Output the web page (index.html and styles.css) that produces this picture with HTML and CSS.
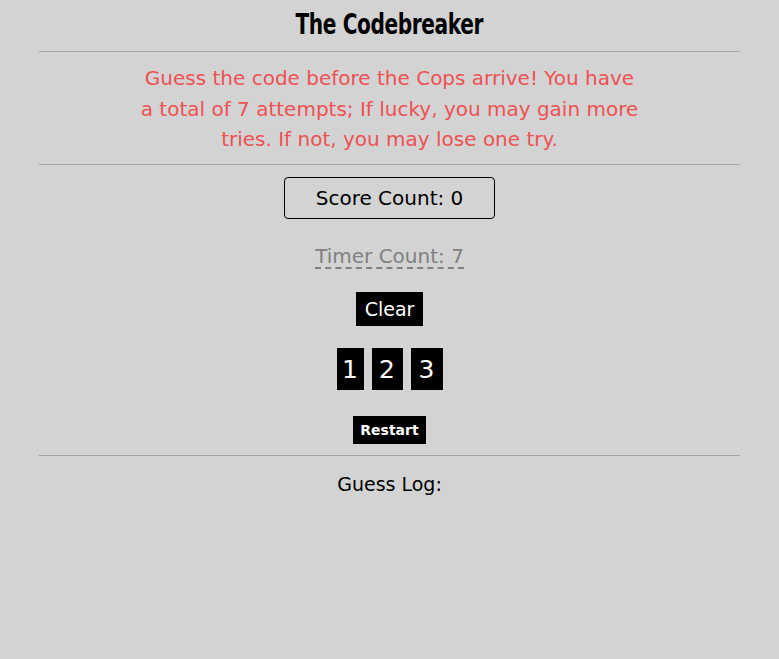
FILE: index.html
```html
<!DOCTYPE html>
<html>
<head>
<meta charset="utf-8">
<link rel="stylesheet" href="styles.css">
</head>
<body>
<main class="page">
  <h1 class="title"><span class="title-text">The Codebreaker</span></h1>
  <hr class="rule">
  <p class="intro">Guess the code before the Cops arrive! You have<br>a total of 7 attempts; If lucky, you may gain more<br>tries. If not, you may lose one try.</p>
  <hr class="rule">
  <div class="score">Score Count: 0</div>
  <div class="timer"><span class="timer-text">Timer Count: 7</span></div>
  <button class="btn clear">Clear</button>
  <div class="digits">
    <button class="btn digit d1">1</button>
    <button class="btn digit d2">2</button>
    <button class="btn digit d3">3</button>
  </div>
  <button class="btn restart">Restart</button>
  <hr class="rule">
  <div class="log">Guess Log:</div>
</main>
</body>
</html>
```
FILE: styles.css
```css
html, body {
  margin: 0;
  padding: 0;
  background: #d3d3d3;
}
body {
  font-family: "Comic Sans MS", "DejaVu Sans", sans-serif;
  color: #000;
}
.page {
  display: flex;
  flex-direction: column;
  align-items: center;
  padding-top: 8px;
}
.title {
  margin: 0;
  height: 34px;
  line-height: 34px;
  font-family: "DejaVu Sans", sans-serif;
  font-stretch: condensed;
  font-weight: 900;
  font-size: 28px;
}
.title-text {
  display: inline-block;
  transform: scaleX(0.8);
  letter-spacing: -0.5px;
}
.rule {
  width: 90%;
  margin: 0;
  border: 0;
  border-top: 1px solid #a3a3a3;
  height: 0;
}
.title + .rule { margin-top: 9px; }
.intro {
  margin: 11px 0 0;
  text-align: center;
  color: #ee5151;
  font-size: 20px;
  line-height: 30.5px;
  height: 92px;
}
.intro + .rule { margin-top: 9px; }
.score {
  margin-top: 12px;
  width: 209px;
  height: 40px;
  border: 1px solid #000;
  border-radius: 4px;
  display: flex;
  align-items: center;
  justify-content: center;
  font-size: 20px;
}
.timer {
  margin-top: 25px;
  font-size: 20px;
  color: #808080;
  height: 25px;
}
.timer-text {
  display: inline-block;
  border-bottom: 2px dashed #808080;
  line-height: 22px;
}
.btn {
  background: #000;
  color: #fff;
  border: 0;
  padding: 0;
  font-family: "Comic Sans MS", "DejaVu Sans", sans-serif;
  cursor: pointer;
}
.clear {
  margin-top: 23px;
  width: 67px;
  height: 34px;
  font-size: 19px;
}
.digits {
  margin-top: 22px;
  display: flex;
  gap: 8px;
}
.digit {
  height: 42px;
  font-size: 25px;
}
.d1 { width: 27px; }
.d2 { width: 31px; }
.d3 { width: 32px; }
.restart {
  margin-top: 26px;
  width: 73px;
  height: 28px;
  font-size: 14px;
  font-weight: 700;
}
.restart + .rule { margin-top: 11px; }
.log {
  margin-top: 16px;
  font-size: 19px;
  line-height: 24px;
}
```
